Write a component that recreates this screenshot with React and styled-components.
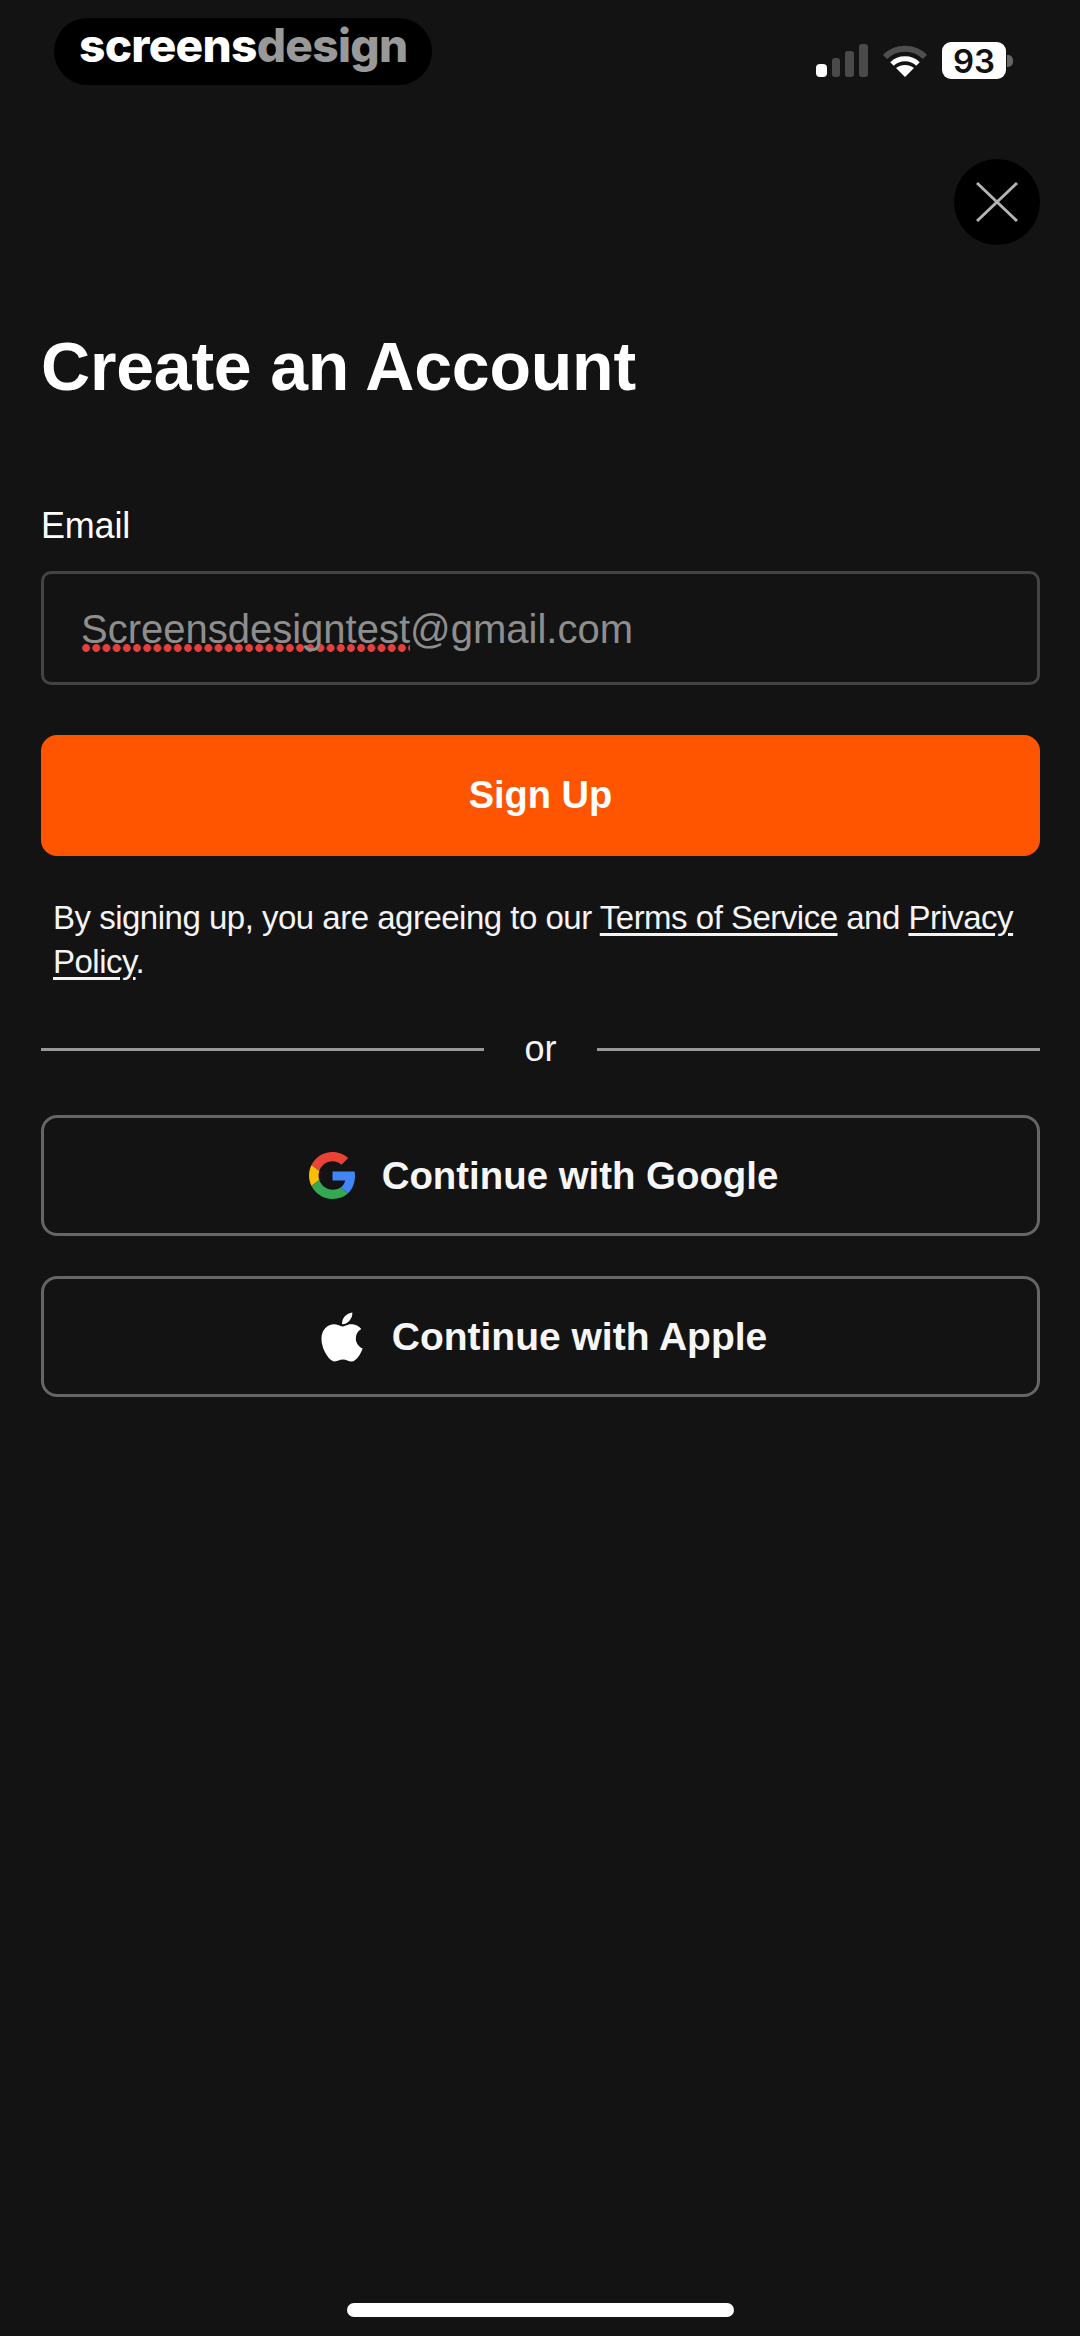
import styled, { createGlobalStyle } from "styled-components";
import { FaApple } from "react-icons/fa";

const GlobalStyle = createGlobalStyle`
  * { box-sizing: border-box; }
  html, body { margin: 0; padding: 0; background: #131314; }
  body { font-family: "Liberation Sans", Arial, sans-serif; color: #fff; }
`;

function SignalIcon() {
  return (
    <svg width="52" height="33" viewBox="0 0 52 33">
      <rect x="0" y="20" width="11" height="13" rx="4" fill="#fff" />
      <rect x="16" y="14" width="8" height="19" rx="3" fill="#4a4a4a" />
      <rect x="29" y="7" width="9" height="26" rx="3" fill="#4a4a4a" />
      <rect x="43" y="0" width="9" height="33" rx="3" fill="#4a4a4a" />
    </svg>
  );
}

function WifiIcon() {
  return (
    <svg width="44" height="33" viewBox="0 0 44 33">
      <path d="M2 13 C13 2 31 2 42 13" fill="none" stroke="#4f4f4f" strokeWidth="6" />
      <path d="M9 20 C16 13 28 13 35 20" fill="none" stroke="#fff" strokeWidth="5" />
      <path d="M22 33 L13 24 C18 20 26 20 31 24 Z" fill="#fff" />
    </svg>
  );
}

function CloseIcon() {
  return (
    <svg width="42" height="42" viewBox="0 0 42 42">
      <path d="M1 2 L41 40 M41 2 L1 40" stroke="#b4b4b4" strokeWidth="3" fill="none" />
    </svg>
  );
}

function GoogleIcon() {
  return (
    <svg width="47" height="47" viewBox="0 0 48 48">
      <path fill="#EA4335" d="M24 9.5c3.54 0 6.71 1.22 9.21 3.6l6.85-6.85C35.9 2.38 30.47 0 24 0 14.62 0 6.51 5.38 2.56 13.22l7.98 6.19C12.43 13.72 17.74 9.5 24 9.5z" />
      <path fill="#4285F4" d="M46.98 24.55c0-1.57-.15-3.09-.38-4.55H24v9.02h12.94c-.58 2.96-2.26 5.48-4.78 7.18l7.73 6c4.51-4.18 7.09-10.36 7.09-17.65z" />
      <path fill="#FBBC05" d="M10.53 28.59c-.48-1.45-.76-2.99-.76-4.59s.27-3.14.76-4.59l-7.98-6.19C.92 16.46 0 20.12 0 24c0 3.88.92 7.54 2.56 10.78l7.97-6.19z" />
      <path fill="#34A853" d="M24 48c6.48 0 11.93-2.13 15.89-5.81l-7.73-6c-2.15 1.45-4.92 2.3-8.16 2.3-6.26 0-11.57-4.22-13.47-9.91l-7.98 6.19C6.51 42.62 14.62 48 24 48z" />
    </svg>
  );
}

export default function App() {
  return (
    <Page>
      <GlobalStyle />

      {/* ---------- STATUS BAR ---------- */}
      <StatusBar>
        <Logo>
          screens<LogoGrey>design</LogoGrey>
        </Logo>
        <StatusIcons>
          <SignalIcon />
          <WifiIcon />
          <Battery>93</Battery>
        </StatusIcons>
      </StatusBar>

      <CloseRow>
        <CloseButton>
          <CloseIcon />
        </CloseButton>
      </CloseRow>

      {/* ---------- FORM ---------- */}
      <Content>
        <Title>Create an Account</Title>
        <Label>Email</Label>
        <EmailField>
          <Misspelled>Screensdesigntest</Misspelled>@gmail.com
        </EmailField>
        <PrimaryButton>Sign Up</PrimaryButton>
        <Terms>
          By signing up, you are agreeing to our <a>Terms of Service</a> and{" "}
          <a>Privacy Policy</a>.
        </Terms>
        <Divider>
          <DividerText>or</DividerText>
        </Divider>
        <SocialList>
          <SocialButton $google>
            <GoogleIcon />
            Continue with Google
          </SocialButton>
          <SocialButton>
            <FaApple size={56} color="#fff" />
            Continue with Apple
          </SocialButton>
        </SocialList>
      </Content>

      <HomeIndicator />
    </Page>
  );
}

const Page = styled.div`
  display: flex;
  flex-direction: column;
  width: 1080px;
  height: 2336px;
  background: #131314;
  overflow: hidden;
`;

const StatusBar = styled.div`
  display: flex;
  justify-content: space-between;
  align-items: flex-start;
  padding: 18px 74px 0 54px;
`;

const Logo = styled.div`
  width: 378px;
  height: 67px;
  padding: 0 0 14px 25px;
  display: flex;
  align-items: center;
  background: #000;
  border-radius: 34px;
  font-family: Inter, sans-serif;
  font-size: 46px;
  font-weight: 800;
  letter-spacing: -0.7px;
  color: #fff;
`;

const LogoGrey = styled.span`
  color: #999;
`;

const StatusIcons = styled.div`
  display: flex;
  align-items: center;
  gap: 15px;
  margin-top: 24px;
`;

const Battery = styled.div`
  position: relative;
  width: 64px;
  height: 37px;
  display: flex;
  align-items: center;
  justify-content: center;
  background: #fff;
  border-radius: 9px;
  font-family: Inter, sans-serif;
  font-size: 33px;
  font-weight: 600;
  color: #111;

  &::after {
    content: "";
    position: absolute;
    right: -7px;
    top: 13px;
    width: 6px;
    height: 12px;
    border-radius: 0 5px 5px 0;
    background: #666;
  }
`;

const CloseRow = styled.div`
  display: flex;
  justify-content: flex-end;
  padding: 74px 40px 0 0;
`;

const CloseButton = styled.div`
  width: 86px;
  height: 86px;
  display: flex;
  align-items: center;
  justify-content: center;
  background: #000;
  border-radius: 50%;
`;

const Content = styled.div`
  display: flex;
  flex-direction: column;
  flex: 1;
  padding: 0 40px 0 41px;
`;

const Title = styled.h1`
  margin: 82px 0 0;
  font-size: 68px;
  line-height: 78px;
  font-weight: 700;
  letter-spacing: -0.2px;
  color: #fff;
`;

const Label = styled.div`
  margin-top: 100px;
  font-size: 36px;
  line-height: 42px;
  letter-spacing: -0.2px;
  color: #fff;
`;

const EmailField = styled.div`
  margin-top: 24px;
  height: 114px;
  padding: 2px 0 0 37px;
  display: flex;
  align-items: center;
  border: 3px solid #444;
  border-radius: 10px;
  font-size: 40px;
  color: #8e8e8e;
`;

const Misspelled = styled.span`
  background-image: radial-gradient(circle, #e5403c 3.6px, transparent 4.2px);
  background-size: 10.2px 8px;
  background-repeat: repeat-x;
  background-position: left bottom;
`;

const PrimaryButton = styled.div`
  margin-top: 50px;
  height: 121px;
  display: flex;
  align-items: center;
  justify-content: center;
  background: #ff5500;
  border-radius: 16px;
  font-size: 38px;
  font-weight: 700;
  color: #fff;
`;

const Terms = styled.p`
  margin: 40px 0 0;
  padding: 0 0 0 12px;
  font-size: 33px;
  line-height: 44px;
  letter-spacing: -0.5px;
  color: #f4f4f4;

  a {
    text-decoration: underline;
    text-underline-offset: 4px;
  }
`;

const Divider = styled.div`
  position: relative;
  margin-top: 43px;
  height: 44px;
  display: flex;
  align-items: center;
  justify-content: center;

  &::before {
    content: "";
    position: absolute;
    left: 0;
    right: 0;
    top: 21px;
    height: 3px;
    background: #999;
  }
`;

const DividerText = styled.span`
  position: relative;
  padding: 0 40px;
  background: #131314;
  font-size: 36px;
  line-height: 44px;
  color: #f4f4f4;
`;

const SocialList = styled.div`
  margin-top: 44px;
  display: flex;
  flex-direction: column;
  gap: 40px;
`;

const SocialButton = styled.div`
  height: 121px;
  padding-left: ${(props) => (props.$google ? "6px" : "0")};
  display: flex;
  align-items: center;
  justify-content: center;
  gap: ${(props) => (props.$google ? "26px" : "22px")};
  border: 3px solid #666;
  border-radius: 16px;
  font-size: ${(props) => (props.$google ? "38.4px" : "39px")};
  font-weight: 700;
  color: #f6f6f6;
`;

const HomeIndicator = styled.div`
  align-self: center;
  flex-shrink: 0;
  width: 387px;
  height: 14px;
  margin-bottom: 19px;
  background: #fff;
  border-radius: 7px;
`;
